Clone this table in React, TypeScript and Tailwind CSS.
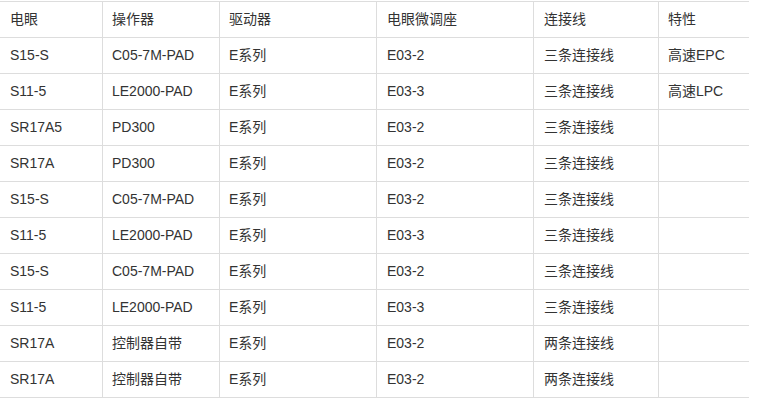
const widths = ["w-[102px]", "w-[117px]", "w-[157px]", "w-[157px]", "w-[125px]", "w-[91px]"];
const pads = ["pl-[10px]", "pl-[9px]", "pl-[9px]", "pl-[10px]", "pl-[10px]", "pl-[9px]"];

const header = ["电眼", "操作器", "驱动器", "电眼微调座", "连接线", "特性"];

const rows: string[][] = [
  ["S15-S", "C05-7M-PAD", "E系列", "E03-2", "三条连接线", "高速EPC"],
  ["S11-5", "LE2000-PAD", "E系列", "E03-3", "三条连接线", "高速LPC"],
  ["SR17A5", "PD300", "E系列", "E03-2", "三条连接线", ""],
  ["SR17A", "PD300", "E系列", "E03-2", "三条连接线", ""],
  ["S15-S", "C05-7M-PAD", "E系列", "E03-2", "三条连接线", ""],
  ["S11-5", "LE2000-PAD", "E系列", "E03-3", "三条连接线", ""],
  ["S15-S", "C05-7M-PAD", "E系列", "E03-2", "三条连接线", ""],
  ["S11-5", "LE2000-PAD", "E系列", "E03-3", "三条连接线", ""],
  ["SR17A", "控制器自带", "E系列", "E03-2", "两条连接线", ""],
  ["SR17A", "控制器自带", "E系列", "E03-2", "两条连接线", ""],
];

function Row({ cells, top }: { cells: string[]; top?: boolean }) {
  return (
    <div className={top ? "flex h-[37px] border-y border-[#dddddd]" : "flex h-[36px] border-b border-[#dddddd]"}>
      {cells.map((c, i) => (
        <div
          key={i}
          className={
            i === 0
              ? `${widths[i]} ${pads[i]} shrink-0 flex items-center`
              : `${widths[i]} ${pads[i]} shrink-0 flex items-center border-l border-[#dddddd]`
          }
        >
          {c}
        </div>
      ))}
    </div>
  );
}

export default function App() {
  return (
    <div
      className="bg-white w-[762px] h-[400px] overflow-hidden pt-px text-[14px] text-[#333333]"
      style={{ fontFamily: '"Liberation Sans", "Noto Sans CJK SC", sans-serif' }}
    >
      <div className="w-[749px]">
        <Row cells={header} top />
        {rows.map((r, i) => (
          <Row key={i} cells={r} />
        ))}
      </div>
    </div>
  );
}
